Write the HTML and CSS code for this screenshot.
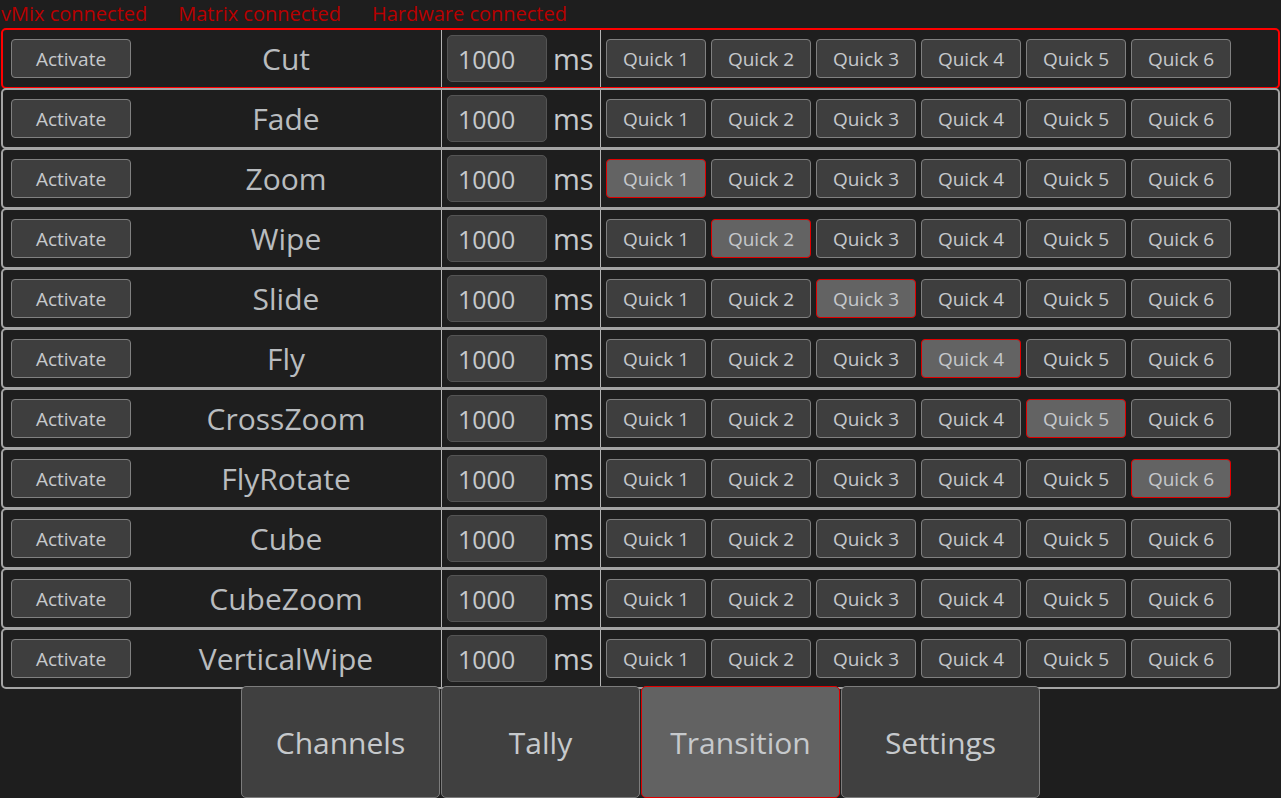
FILE: index.html
```html
<!DOCTYPE html>
<html lang="en">
  <head>
    <meta charset="UTF-8" />
    <meta name="viewport" content="width=device-width, initial-scale=1.0" />
    <title>Transition</title>
    <link rel="stylesheet" href="styles.css">
  </head>
  <body>
    <div class="status">
      <span>vMix connected</span>
      <span>Matrix connected</span>
      <span>Hardware connected</span>
    </div>

    <div class="list">
      <div class="row selected">
        <div class="col-name"><button class="btn">Activate</button><span class="name">Cut</span></div>
        <div class="col-time"><input class="time" type="text" value="1000" /><span class="unit">ms</span></div>
        <div class="col-quick">
          <button class="btn">Quick 1</button><button class="btn">Quick 2</button><button class="btn">Quick 3</button>
          <button class="btn">Quick 4</button><button class="btn">Quick 5</button><button class="btn">Quick 6</button>
        </div>
      </div>
      <div class="row">
        <div class="col-name"><button class="btn">Activate</button><span class="name">Fade</span></div>
        <div class="col-time"><input class="time" type="text" value="1000" /><span class="unit">ms</span></div>
        <div class="col-quick">
          <button class="btn">Quick 1</button><button class="btn">Quick 2</button><button class="btn">Quick 3</button>
          <button class="btn">Quick 4</button><button class="btn">Quick 5</button><button class="btn">Quick 6</button>
        </div>
      </div>
      <div class="row">
        <div class="col-name"><button class="btn">Activate</button><span class="name">Zoom</span></div>
        <div class="col-time"><input class="time" type="text" value="1000" /><span class="unit">ms</span></div>
        <div class="col-quick">
          <button class="btn on">Quick 1</button><button class="btn">Quick 2</button><button class="btn">Quick 3</button>
          <button class="btn">Quick 4</button><button class="btn">Quick 5</button><button class="btn">Quick 6</button>
        </div>
      </div>
      <div class="row">
        <div class="col-name"><button class="btn">Activate</button><span class="name">Wipe</span></div>
        <div class="col-time"><input class="time" type="text" value="1000" /><span class="unit">ms</span></div>
        <div class="col-quick">
          <button class="btn">Quick 1</button><button class="btn on">Quick 2</button><button class="btn">Quick 3</button>
          <button class="btn">Quick 4</button><button class="btn">Quick 5</button><button class="btn">Quick 6</button>
        </div>
      </div>
      <div class="row">
        <div class="col-name"><button class="btn">Activate</button><span class="name">Slide</span></div>
        <div class="col-time"><input class="time" type="text" value="1000" /><span class="unit">ms</span></div>
        <div class="col-quick">
          <button class="btn">Quick 1</button><button class="btn">Quick 2</button><button class="btn on">Quick 3</button>
          <button class="btn">Quick 4</button><button class="btn">Quick 5</button><button class="btn">Quick 6</button>
        </div>
      </div>
      <div class="row">
        <div class="col-name"><button class="btn">Activate</button><span class="name">Fly</span></div>
        <div class="col-time"><input class="time" type="text" value="1000" /><span class="unit">ms</span></div>
        <div class="col-quick">
          <button class="btn">Quick 1</button><button class="btn">Quick 2</button><button class="btn">Quick 3</button>
          <button class="btn on">Quick 4</button><button class="btn">Quick 5</button><button class="btn">Quick 6</button>
        </div>
      </div>
      <div class="row">
        <div class="col-name"><button class="btn">Activate</button><span class="name">CrossZoom</span></div>
        <div class="col-time"><input class="time" type="text" value="1000" /><span class="unit">ms</span></div>
        <div class="col-quick">
          <button class="btn">Quick 1</button><button class="btn">Quick 2</button><button class="btn">Quick 3</button>
          <button class="btn">Quick 4</button><button class="btn on">Quick 5</button><button class="btn">Quick 6</button>
        </div>
      </div>
      <div class="row">
        <div class="col-name"><button class="btn">Activate</button><span class="name">FlyRotate</span></div>
        <div class="col-time"><input class="time" type="text" value="1000" /><span class="unit">ms</span></div>
        <div class="col-quick">
          <button class="btn">Quick 1</button><button class="btn">Quick 2</button><button class="btn">Quick 3</button>
          <button class="btn">Quick 4</button><button class="btn">Quick 5</button><button class="btn on">Quick 6</button>
        </div>
      </div>
      <div class="row">
        <div class="col-name"><button class="btn">Activate</button><span class="name">Cube</span></div>
        <div class="col-time"><input class="time" type="text" value="1000" /><span class="unit">ms</span></div>
        <div class="col-quick">
          <button class="btn">Quick 1</button><button class="btn">Quick 2</button><button class="btn">Quick 3</button>
          <button class="btn">Quick 4</button><button class="btn">Quick 5</button><button class="btn">Quick 6</button>
        </div>
      </div>
      <div class="row">
        <div class="col-name"><button class="btn">Activate</button><span class="name">CubeZoom</span></div>
        <div class="col-time"><input class="time" type="text" value="1000" /><span class="unit">ms</span></div>
        <div class="col-quick">
          <button class="btn">Quick 1</button><button class="btn">Quick 2</button><button class="btn">Quick 3</button>
          <button class="btn">Quick 4</button><button class="btn">Quick 5</button><button class="btn">Quick 6</button>
        </div>
      </div>
      <div class="row">
        <div class="col-name"><button class="btn">Activate</button><span class="name">VerticalWipe</span></div>
        <div class="col-time"><input class="time" type="text" value="1000" /><span class="unit">ms</span></div>
        <div class="col-quick">
          <button class="btn">Quick 1</button><button class="btn">Quick 2</button><button class="btn">Quick 3</button>
          <button class="btn">Quick 4</button><button class="btn">Quick 5</button><button class="btn">Quick 6</button>
        </div>
      </div>
    </div>

    <div class="tabs">
      <button class="tab">Channels</button>
      <button class="tab">Tally</button>
      <button class="tab on">Transition</button>
      <button class="tab">Settings</button>
    </div>
  </body>
</html>
```

FILE: styles.css
```css
html,
body {
  margin: 0;
  height: 100%;
  overflow: hidden;
}
body {
  background-color: #1e1e1e;
  font-family: "Open Sans", "Noto Sans", sans-serif;
  color: #c6c9cc;
}
.status {
  height: 28px;
  display: flex;
  align-items: center;
  gap: 31px;
  padding-left: 1px;
  font-size: 20px;
  color: #b80000;
  line-height: 1;
}

.list {
  padding: 0 1px;
}
.row {
  box-sizing: border-box;
  height: 61px;
  margin-bottom: -1px;
  display: flex;
  border: 2px solid #a4a4a4;
  border-radius: 5px;
  background-color: #1e1e1e;
}
.row.selected {
  border-color: #ff0000;
}

.btn {
  box-sizing: border-box;
  width: 100px;
  height: 39px;
  padding: 0;
  font-family: inherit;
  font-size: 19px;
  color: #c6c9cc;
  background-color: #3e3e3e;
  border: 1px solid #808080;
  border-radius: 4px;
}
.btn.on {
  background-color: #636363;
  border-color: #e00000;
}

.col-name {
  width: 438px;
  display: flex;
  align-items: center;
  padding-left: 8px;
  box-sizing: border-box;
}
.col-name .btn {
  width: 120px;
}
.name {
  flex: 1;
  text-align: center;
  font-size: 30px;
  color: #b9bcbf;
}

.col-time {
  width: 159px;
  box-sizing: border-box;
  border-left: 1px solid #b4b4b4;
  display: flex;
  align-items: center;
  padding-left: 5px;
  gap: 6px;
}
.time {
  box-sizing: border-box;
  width: 100px;
  height: 47px;
  padding: 0 0 0 10px;
  font-family: inherit;
  font-size: 25px;
  color: #c6c9cc;
  background-color: #3e3e3e;
  border: 1px solid #545454;
  border-radius: 5px;
  outline: none;
}
.unit {
  font-size: 29px;
}

.col-quick {
  flex: 1;
  border-left: 1px solid #b4b4b4;
  display: flex;
  align-items: center;
  gap: 5px;
  padding-left: 5px;
}

.tabs {
  margin-top: -3px;
  display: flex;
  justify-content: center;
  gap: 1px;
}
.tab {
  box-sizing: border-box;
  width: 199px;
  height: 112px;
  font-family: inherit;
  font-size: 30px;
  color: #c6c9cc;
  background-color: #404040;
  border: 1px solid #7c7c7c;
  border-radius: 5px;
  padding: 0;
}
.tab.on {
  background-color: #626262;
  border-color: #e00000;
}
```
